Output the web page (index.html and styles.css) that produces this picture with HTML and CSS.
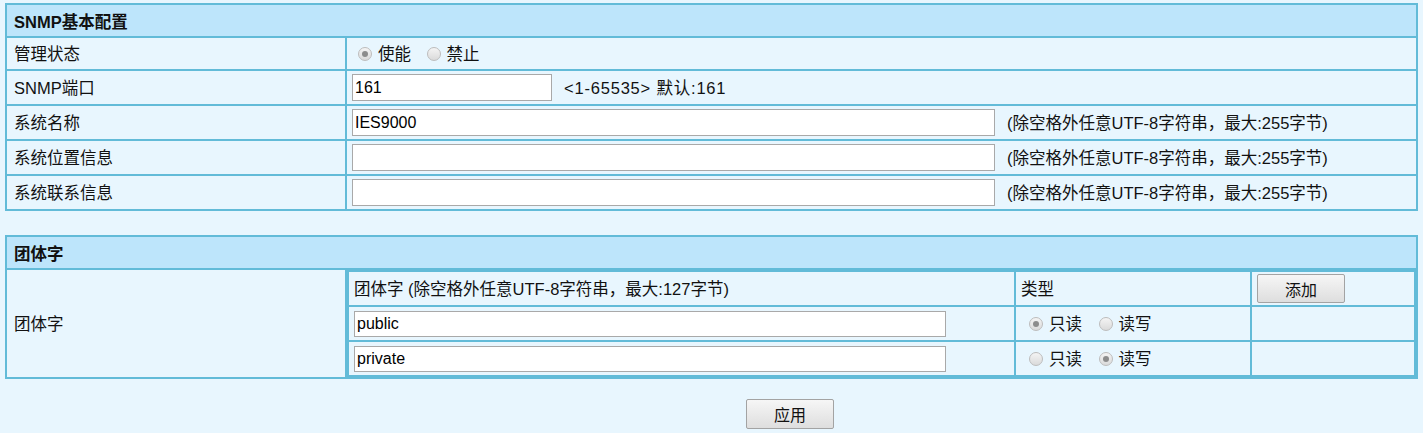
FILE: index.html
```html
<!DOCTYPE html>
<html lang="zh-CN">
<head>
	<meta charset="UTF-8">
	<title>SNMP</title>
	<link rel="stylesheet" href="styles.css">
</head>
<body>
	<div class="page">
		<table class="cfg">
			<tr><th colspan="2">SNMP基本配置</th></tr>
			<tr>
				<td class="lbl">管理状态</td>
				<td class="val">
					<label class="radio"><span class="dot on"></span>使能</label>
					<label class="radio"><span class="dot"></span>禁止</label>
				</td>
			</tr>
			<tr class="in-row">
				<td class="lbl">SNMP端口</td>
				<td class="val"><input class="txt port" type="text" value="161"><span class="hint range">&lt;1-65535&gt; 默认:161</span></td>
			</tr>
			<tr class="in-row">
				<td class="lbl">系统名称</td>
				<td class="val"><input class="txt wide" type="text" value="IES9000"><span class="hint">(除空格外任意UTF-8字符串，最大:255字节)</span></td>
			</tr>
			<tr class="in-row">
				<td class="lbl">系统位置信息</td>
				<td class="val"><input class="txt wide" type="text" value=""><span class="hint">(除空格外任意UTF-8字符串，最大:255字节)</span></td>
			</tr>
			<tr class="in-row">
				<td class="lbl">系统联系信息</td>
				<td class="val"><input class="txt wide" type="text" value=""><span class="hint">(除空格外任意UTF-8字符串，最大:255字节)</span></td>
			</tr>
		</table>

		<table class="cfg comm">
			<tr><th colspan="2">团体字</th></tr>
			<tr>
				<td class="lbl">团体字</td>
				<td class="wrap">
					<table class="inner">
						<tr class="head">
							<td class="c-name">团体字 (除空格外任意UTF-8字符串，最大:127字节)</td>
							<td class="c-type">类型</td>
							<td class="c-op"><button class="btn">添加</button></td>
						</tr>
						<tr>
							<td class="c-name"><input class="txt comm-in" type="text" value="public"></td>
							<td class="c-type">
								<label class="radio"><span class="dot on"></span>只读</label>
								<label class="radio"><span class="dot"></span>读写</label>
							</td>
							<td class="c-op"></td>
						</tr>
						<tr>
							<td class="c-name"><input class="txt comm-in" type="text" value="private"></td>
							<td class="c-type">
								<label class="radio"><span class="dot"></span>只读</label>
								<label class="radio"><span class="dot on"></span>读写</label>
							</td>
							<td class="c-op"></td>
						</tr>
					</table>
				</td>
			</tr>
		</table>

		<div class="actions"><button class="btn">应用</button></div>
	</div>
</body>
</html>
```

FILE: styles.css
```css
body {
	margin: 0;
	background: #e8f6fe;
	font-family: "Liberation Sans", "Noto Sans CJK SC", sans-serif;
	font-size: 16.5px;
	color: #111;
}

.page {
	padding: 3px 5px;
}

.cfg {
	width: 100%;
	border-collapse: collapse;
	border: 2px solid #62bbd8;
}

.cfg th {
	background: #bde5fb;
	text-align: left;
	font-weight: bold;
	height: 31px;
	padding: 0 7px;
	border: 2px solid #62bbd8;
}

.cfg td {
	border: 2px solid #62bbd8;
	height: 31px;
	padding: 0 5px;
	line-height: 20px;
}

.cfg td.lbl {
	width: 324px;
	padding: 0 7px;
}

.in-row td {
	height: 33px;
}

.txt {
	box-sizing: border-box;
	height: 27px;
	border: 1px solid #a9a9a9;
	padding: 0 2px;
	font-family: "Liberation Sans", sans-serif;
	font-size: 16px;
	color: #000;
	background: #fff;
	vertical-align: middle;
}

.port {
	width: 200px;
}

.wide {
	width: 643px;
}

.comm-in {
	width: 592px;
	height: 26px;
}

.hint {
	margin-left: 12px;
	vertical-align: middle;
}

.range {
	letter-spacing: 0.8px;
}

.radio {
	display: inline-flex;
	align-items: center;
	vertical-align: middle;
	margin-left: 6px;
	margin-right: 5px;
}

.dot {
	box-sizing: border-box;
	width: 14px;
	height: 14px;
	border-radius: 50%;
	border: 1px solid #bdbdbd;
	background: linear-gradient(#f4f4f4, #dadada);
	margin-right: 6px;
	display: flex;
	align-items: center;
	justify-content: center;
}

.dot.on::after {
	content: "";
	width: 6px;
	height: 6px;
	border-radius: 50%;
	background: #8c8c8c;
}

.comm {
	margin-top: 24px;
}

.cfg td.wrap {
	padding: 0;
}

.inner {
	width: 100%;
	border-collapse: collapse;
	border: 1px solid #62bbd8;
}

.cfg .inner td {
	height: 33px;
	padding: 0 5px;
}

.inner .c-type {
	width: 224px;
}

.inner .c-type .radio {
	margin-left: 8px;
	margin-right: 4px;
}

.inner .c-op {
	width: 152px;
}

.btn {
	width: 88px;
	height: 29px;
	border: 1px solid #a3a3a3;
	border-radius: 2px;
	background: linear-gradient(#f6f6f6, #dedede);
	font-family: "Liberation Sans", "Noto Sans CJK SC", sans-serif;
	font-size: 16px;
	color: #111;
	padding: 0;
}

.actions {
	padding: 20px 0 0 741px;
}

.actions .btn {
	height: 30px;
}
```
